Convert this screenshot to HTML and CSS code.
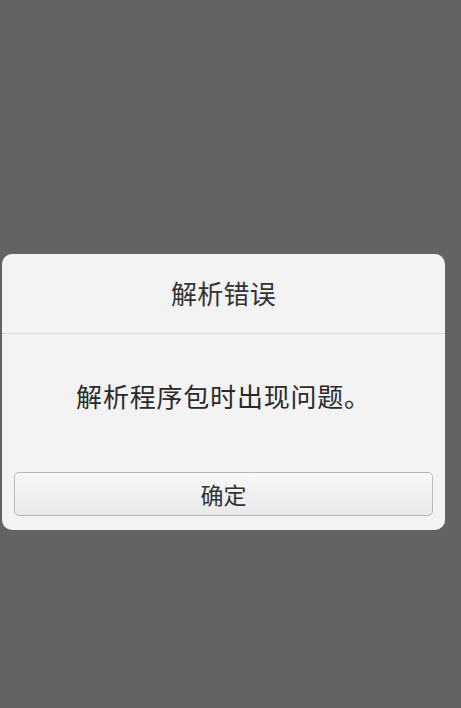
FILE: index.html
```html
<!DOCTYPE html>
<html lang="zh-CN">
<head>
<meta charset="utf-8">
<title>解析错误</title>
<link rel="stylesheet" href="styles.css">
</head>
<body>
<div class="screen">
  <div class="dialog">
    <div class="dialog-title">解析错误</div>
    <div class="dialog-message">解析程序包时出现问题。</div>
    <div class="dialog-actions">
      <button class="dialog-button" type="button">确定</button>
    </div>
  </div>
</div>
</body>
</html>
```
FILE: styles.css
```css
html, body {
  margin: 0;
  padding: 0;
  background: #636363;
}
body {
  font-family: "Noto Sans CJK SC", "Noto Sans", sans-serif;
}
.screen {
  width: 461px;
  height: 708px;
  box-sizing: border-box;
  padding: 254px 16px 0 2px;
}
.dialog {
  width: 443px;
  background: #f3f3f3;
  border-radius: 10px;
  display: flex;
  flex-direction: column;
}
.dialog-title {
  height: 80px;
  display: flex;
  align-items: center;
  justify-content: center;
  padding-bottom: 2px;
  box-sizing: border-box;
  font-size: 26px;
  letter-spacing: 0.3px;
  color: #333333;
  border-bottom: 1px solid #d6d6d6;
}
.dialog-message {
  padding: 47px 0 61px;
  line-height: 30px;
  text-align: center;
  font-size: 26px;
  letter-spacing: 0.8px;
  color: #2a2a2a;
}
.dialog-actions {
  padding: 0 12px 14px;
}
.dialog-button {
  display: block;
  width: 100%;
  height: 44px;
  margin: 0;
  padding: 0;
  border: 1px solid #b9b9b9;
  border-radius: 5px;
  background: linear-gradient(#f8f8f8, #e9e9e9);
  font-family: "Noto Sans CJK SC", "Noto Sans", sans-serif;
  font-size: 23px;
  color: #333333;
}
```
